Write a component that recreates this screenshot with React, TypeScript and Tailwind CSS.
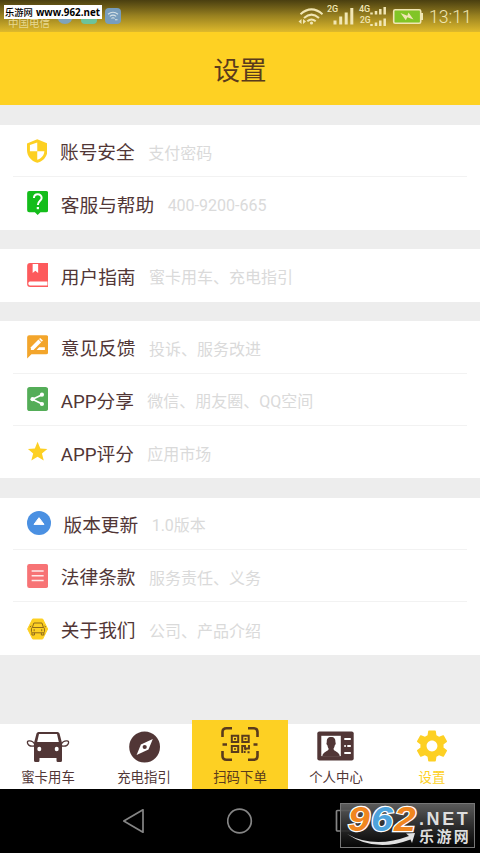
import type { ReactNode } from 'react';

interface SettingItem {
  title: string;
  hint: string;
  icon: ReactNode;
  width: string;
}

const ShieldIcon = () => (
  <svg viewBox="0 0 21 24" className="h-6 w-full">
    <path d="M10.5 0 L21 4.2 V11 C21 17.5 16.8 22.3 10.5 24 C4.2 22.3 0 17.5 0 11 V4.2 Z" fill="#fdd023" />
    <path d="M10.5 3.3 V12.2 H3 V5.9 Z" fill="#fff" />
    <path d="M10.5 12.2 H17.8 C17.4 16.4 14.8 19.6 10.5 21 Z" fill="#fff" />
  </svg>
);

const HelpIcon = () => (
  <svg viewBox="0 0 21 24" className="h-6 w-full">
    <path d="M2 0 H19 Q21 0 21 2 V19.3 Q21 21.3 19 21.3 H13.3 L10.5 24 L7.7 21.3 H2 Q0 21.3 0 19.3 V2 Q0 0 2 0Z" fill="#14bd1b" />
    <path d="M6.8 7 C6.8 2 14.5 2 14.5 6.9 C14.5 9.7 10.7 10 10.7 14" fill="none" stroke="#fff" strokeWidth="2" />
    <rect x="9.6" y="16" width="2.2" height="2.2" fill="#fff" />
  </svg>
);

const BookIcon = () => (
  <svg viewBox="0 0 21 24" className="h-6 w-full">
    <path d="M3 0 H21 V24 H3 Q0 24 0 21 V3 Q0 0 3 0Z" fill="#fd5a5c" />
    <path d="M5.5 1 H11 V10 L8.2 7.8 L5.5 10Z" fill="#fff" />
    <path d="M2.8 18.6 H20.3 V22.6 H2.8 Q1.2 22.4 1.2 20.6 Q1.2 18.8 2.8 18.6Z" fill="#fff" />
  </svg>
);

const FeedbackIcon = () => (
  <svg viewBox="0 0 21 24" className="h-6 w-full">
    <path d="M2 0.3 H19 Q21 0.3 21 2.3 V17.3 Q21 19.3 19 19.3 H4.3 L0 23.6 V2.3 Q0 0.3 2 0.3Z" fill="#f3a52b" />
    <path d="M3.7 12.2 L11.3 4.6 L14 7.3 L6.4 14.9 H3.7Z" fill="#fff" />
    <path d="M11.9 4 L13 2.9 L15.8 5.6 L14.6 6.8Z" fill="#fff" />
    <path d="M9.4 14.9 L12 12.2 H17.7 V14.9Z" fill="#fff" />
  </svg>
);

const ShareIcon = () => (
  <svg viewBox="0 0 21 24" className="h-6 w-full">
    <rect width="21" height="24" rx="2.6" fill="#54ad58" />
    <path d="M15 7.7 L5.4 12.2 L15 17" fill="none" stroke="#fff" strokeWidth="1.8" />
    <circle cx="14.8" cy="7.7" r="2.1" fill="#fff" />
    <circle cx="5.4" cy="12.2" r="2.1" fill="#fff" />
    <circle cx="14.8" cy="17" r="2.1" fill="#fff" />
  </svg>
);

const StarIcon = () => (
  <svg viewBox="0 0 21 24" className="h-6 w-full">
    <path d="M10.4 1.8 L13.2 8.4 L20.2 9 L14.8 13.6 L16.6 20.4 L10.4 16.7 L4.2 20.4 L6 13.6 L0.8 9 L7.7 8.4Z" fill="#fdd023" />
  </svg>
);

const UpdateIcon = () => (
  <svg viewBox="0 0 24 24" className="h-6 w-full">
    <circle cx="12" cy="12" r="12" fill="#4a90e2" />
    <path d="M12 6.7 L17 13.4 H7Z" fill="#fff" stroke="#fff" strokeWidth="1" strokeLinejoin="round" />
  </svg>
);

const TermsIcon = () => (
  <svg viewBox="0 0 21 24" className="h-6 w-full">
    <rect width="21" height="24" rx="2.2" fill="#f77375" />
    <path d="M4.5 7 H16.5 M4.5 11.7 H16.5 M4.5 16.5 H16.5" stroke="#fff" strokeOpacity="0.85" strokeWidth="1.6" />
  </svg>
);

const AboutIcon = () => (
  <svg viewBox="0 0 21 24" className="h-6 w-full">
    <path d="M5.5 2 H15.5 L20.5 12 L15.5 22 H5.5 L0.5 12Z" fill="#fdd023" stroke="#fdd023" strokeLinejoin="round" />
    <g fill="none" stroke="#8f6a1c" strokeWidth="1">
      <path d="M5.2 10.5 L6.7 6 H14.8 L16.3 10.5" />
      <rect x="4.3" y="10.5" width="13" height="5.3" rx="1.2" />
      <path d="M4.8 15.8 V18 H7.3 V15.8 M14.2 15.8 V18 H16.7 V15.8 M7 12.2 V14.2 M14.6 12.2 V14.2 M4.2 9 L2.7 10 M17.3 9 L18.8 10" />
    </g>
  </svg>
);

const groups: SettingItem[][] = [
  [
    { title: '账号安全', hint: '支付密码', icon: <ShieldIcon />, width: 'w-[20.5px]' },
    { title: '客服与帮助', hint: '400-9200-665', icon: <HelpIcon />, width: 'w-[21.3px]' },
  ],
  [{ title: '用户指南', hint: '蜜卡用车、充电指引', icon: <BookIcon />, width: 'w-[21.3px]' }],
  [
    { title: '意见反馈', hint: '投诉、服务改进', icon: <FeedbackIcon />, width: 'w-[21.3px]' },
    { title: 'APP分享', hint: '微信、朋友圈、QQ空间', icon: <ShareIcon />, width: 'w-[21.3px]' },
    { title: 'APP评分', hint: '应用市场', icon: <StarIcon />, width: 'w-[21.3px]' },
  ],
  [
    { title: '版本更新', hint: '1.0版本', icon: <UpdateIcon />, width: 'w-6' },
    { title: '法律条款', hint: '服务责任、义务', icon: <TermsIcon />, width: 'w-[21.3px]' },
    { title: '关于我们', hint: '公司、产品介绍', icon: <AboutIcon />, width: 'w-[21.3px]' },
  ],
];

const CarIcon = () => (
  <svg width="44" height="32" viewBox="0 0 44 32">
    <path
      fillRule="evenodd"
      fill="#513636"
      d="M12.5 1 H31.5 Q33 1 33.5 2.5 L36 12 V29.5 Q36 31 34.5 31 H31.8 Q30.5 31 30.5 29.5 V27 H13.5 V29.5 Q13.5 31 12.2 31 H9.5 Q8 31 8 29.5 V12 L10.5 2.5 Q11 1 12.5 1Z M13 3 L11.2 11 H32.8 L31 3Z"
    />
    <ellipse cx="13.3" cy="18" rx="2" ry="2.2" fill="#fff" />
    <ellipse cx="30.7" cy="18" rx="2" ry="2.2" fill="#fff" />
    <path
      d="M8.5 13 Q7 9.5 3 9.8 Q1 10 1.5 12 Q2.5 15.8 8 15 M35.5 13 Q37 9.5 41 9.8 Q43 10 42.5 12 Q41.5 15.8 36 15"
      fill="none"
      stroke="#513636"
      strokeWidth="1.3"
    />
  </svg>
);

const CompassIcon = () => (
  <svg width="32" height="32" viewBox="0 0 32 32">
    <circle cx="16.6" cy="16" r="15.4" fill="#513636" />
    <path d="M24.8 8 L20.5 18.4 L8.6 24 L12.9 13.6Z" fill="#fff" />
    <circle cx="16.7" cy="16" r="2.1" fill="#513636" />
  </svg>
);

const ScanIcon = () => (
  <svg width="40" height="36" viewBox="0 0 40 36" fill="none" stroke="#5a3b1c">
    <path d="M2.5 11 V6 Q2.5 2.3 6.5 2.3 H12 M28 2.3 H33.5 Q37.5 2.3 37.5 6 V11 M37.5 25 V30 Q37.5 33.7 33.5 33.7 H28 M12 33.7 H6.5 Q2.5 33.7 2.5 30 V25" strokeWidth="2.6" />
    <path d="M2.5 18.5 H7 M33.5 18.5 H37.5" strokeWidth="2.4" />
    <path d="M11.8 9.8 H18.2 V16 H11.8Z M22.3 9.8 H28.7 V16 H22.3Z M11.8 20 H18.2 V26 H11.8Z" strokeWidth="2" />
    <path d="M14 12.9 H16 M24.5 12.9 H26.5 M14 23 H16" strokeWidth="1.6" />
    <path d="M22.2 27 V20 H25 V22.5 H29 V19 M25.5 22.5 V24.3 M23.8 26 H25.6 M27.5 26.2 H29.6" strokeWidth="1.9" />
  </svg>
);

const ProfileIcon = () => (
  <svg width="38" height="30" viewBox="0 0 38 30">
    <rect x="0.3" y="0.4" width="36.4" height="29.2" rx="2" fill="#513636" />
    <rect x="4.3" y="4.8" width="19.5" height="20.3" fill="#fff" />
    <path d="M14.1 6.1 C17.3 6.1 18.6 8.1 18.4 11.2 C19.2 11.8 18.6 13.8 17.8 14.2 C17.5 16.1 16.8 17.1 16.5 17.8 C16.6 20.8 22.3 20.3 22.8 25.3 H5.3 C5.8 20.3 11.5 20.8 11.7 17.8 C11.3 17.1 10.7 16.1 10.4 14.2 C9.6 13.8 9 11.8 9.8 11.2 C9.6 8.1 10.8 6.1 14.1 6.1Z" fill="#513636" />
    <path d="M27.3 8 H33.8 M30.3 15 H33.8 M27.3 15 H28.8 M27.3 22 H33.8" stroke="#fff" strokeWidth="2.2" />
  </svg>
);

const GearIcon = () => (
  <svg width="34" height="34" viewBox="1 1 22 22">
    <path
      fill="#fdd023"
      d="M19.43 12.98c.04-.32.07-.64.07-.98s-.03-.66-.07-.98l2.11-1.65c.19-.15.24-.42.12-.64l-2-3.46c-.12-.22-.39-.3-.61-.22l-2.49 1c-.52-.4-1.08-.73-1.69-.98l-.38-2.65C14.46 2.18 14.25 2 14 2h-4c-.25 0-.46.18-.49.42l-.38 2.65c-.61.25-1.17.59-1.69.98l-2.49-1c-.23-.09-.49 0-.61.22l-2 3.46c-.13.22-.07.49.12.64l2.11 1.65c-.04.32-.07.65-.07.98s.03.66.07.98l-2.11 1.65c-.19.15-.24.42-.12.64l2 3.46c.12.22.39.3.61.22l2.49-1c.52.4 1.08.73 1.69.98l.38 2.65c.03.24.24.42.49.42h4c.25 0 .46-.18.49-.42l.38-2.65c.61-.25 1.17-.59 1.69-.98l2.49 1c.23.09.49 0 .61-.22l2-3.46c.12-.22.07-.49-.12-.64l-2.11-1.65zM12 15.5c-1.93 0-3.5-1.57-3.5-3.5s1.57-3.5 3.5-3.5 3.5 1.57 3.5 3.5-1.57 3.5-3.5 3.5z"
    />
  </svg>
);

const tabs = [
  { label: '蜜卡用车', icon: <CarIcon />, style: 'text-[#513636]', iconPad: 'pt-[3px]' },
  { label: '充电指引', icon: <CompassIcon />, style: 'text-[#513636]', iconPad: 'pt-[3px]' },
  { label: '扫码下单', icon: <ScanIcon />, style: 'bg-[#fdd023] text-[#5a3b1c]', iconPad: 'pb-[2px]' },
  { label: '个人中心', icon: <ProfileIcon />, style: 'text-[#513636]', iconPad: 'pt-[2px]' },
  { label: '设置', icon: <GearIcon />, style: 'text-[#fdd023]', iconPad: 'pt-[2px]' },
];

function StatusBar() {
  return (
    <div className="relative h-8 bg-gradient-to-b from-[#4a3f10] via-[#9a8220] to-[#dfba2c]">
      <span className="absolute top-[16px] left-[8px] text-[10.5px] leading-4 text-[#e8d890]">中国电信</span>
      <div className="absolute top-2 left-[57px] h-4 w-4 rounded-full bg-[#7fa3ba]" />
      <div className="absolute top-2 left-[81px] h-4 w-4 rounded bg-[#6dc39a]" />
      <div className="absolute top-2 left-[105px] flex h-4 w-4 items-center justify-center rounded bg-[#779dbd]">
        <svg width="12" height="12" viewBox="0 0 12 12" fill="none" stroke="#d6e2e6" strokeWidth="1.1">
          <path d="M1 4.3 Q6 0.2 11 4.3 M2.8 6.4 Q6 3.8 9.2 6.4 M4.4 8.4 Q6 7.1 7.6 8.4 M8 9.8 H10.5" />
        </svg>
      </div>
      <div className="absolute top-[5px] left-[4px] flex h-[14px] w-[98px] items-center gap-[3px] bg-white pt-px pl-px text-black">
        <span className="text-[9.3px] leading-3 font-medium whitespace-nowrap">乐游网</span>
        <span className="font-['Open_Sans'] text-[9.8px] leading-3 font-bold whitespace-nowrap">www.962.net</span>
      </div>

      <div className="absolute top-0 right-0 h-8 w-[184px] text-[#f1e6b4]">
        <svg width="184" height="32" viewBox="296 0 184 32">
          <g fill="none" stroke="#f1e6b4" strokeWidth="2">
            <path d="M300.5 14.2 Q311.5 4.6 322.5 14.2" />
            <path d="M304 18 Q311.5 11.2 319 18" />
            <path d="M307.3 21.3 Q311.5 17.6 315.7 21.3" />
          </g>
          <circle cx="311.5" cy="23" r="1.6" fill="#f1e6b4" />
          <path d="M301.5 19 V24 L298.5 21.5Z M303 19 V24 L306 21.5Z" fill="#f1e6b4" />
          <path d="M335 24.5 V20.5 M340.7 24.5 V16.5 M346.2 24.5 V12.5 M351.8 24.5 V8" stroke="#f1e6b4" strokeWidth="3" />
          <path d="M371.5 14.5 V12.5 M376 14.5 V11 M380.3 14.5 V9 M384.7 14.5 V7 M371.5 26 V24 M376 26 V22.5 M380.3 26 V20.5 M384.7 26 V18.5" stroke="#f1e6b4" strokeWidth="2.5" />
          <rect x="393.7" y="9.7" width="27" height="13.6" rx="1.5" fill="#81c526" stroke="#f1e6b4" strokeWidth="1.6" />
          <rect x="421" y="13" width="2" height="7" fill="#f1e6b4" />
          <path d="M400.5 13 L407.3 15.8 L408.5 12.6 L413.5 19.6 L407.3 17.3 L405.8 20.3Z" fill="#f1e6b4" />
        </svg>
        <span className="absolute top-[4px] left-[31px] text-[9px] leading-[10px] font-medium">2G</span>
        <span className="absolute top-[4px] left-[63px] text-[9px] leading-[10px] font-medium">4G</span>
        <span className="absolute top-[15px] left-[64px] text-[8.5px] leading-[10px] font-medium">2G</span>
        <span className="absolute top-[7px] left-[133px] text-[17.6px] leading-5 font-light">13:11</span>
      </div>
    </div>
  );
}

function SettingRow({ item, last }: { item: SettingItem; last: boolean }) {
  return (
    <div className="flex h-[52.3px] flex-col pl-[13px]">
      <div className="flex min-h-0 flex-1 items-center pr-3 pl-[13.5px]">
        <div className={`${item.width} shrink-0`}>{item.icon}</div>
        <span className="mt-[5px] ml-[13px] text-[18.7px] leading-6 whitespace-nowrap text-[#513636]">{item.title}</span>
        <span className="mt-[6px] ml-[13.4px] text-base leading-6 whitespace-nowrap text-[#dadada]">{item.hint}</span>
      </div>
      {!last && <div className="mr-[13px] h-px bg-[#f2f2f2]" />}
    </div>
  );
}

function Watermark() {
  return (
    <div className="absolute top-[14px] left-[340px] h-[45px] w-[135px] border border-[#777] bg-gradient-to-b from-[#656565]/90 to-[#080808]/90">
      <svg width="133" height="43" viewBox="341 804 133 43" className="absolute top-0 left-0 overflow-visible">
        <path d="M347 834 Q374 849 409 836 L406 833.5 L415 833 L412 843 L410.5 839.5 Q375 853 347 834Z" fill="#e2e2e2" />
      </svg>
      <div className="absolute top-[2px] left-[7px] flex w-[72px] justify-between pr-[3px] font-['Liberation_Sans',sans-serif] text-[35px] leading-[25px] font-bold italic [paint-order:stroke] [-webkit-text-stroke:2.4px_#fff]">
        <span className="w-[23px] origin-left scale-x-[1.12] text-[#f0861f]">9</span>
        <span className="w-[23px] origin-left scale-x-[1.12] text-[#4da3dc]">6</span>
        <span className="w-[23px] origin-left scale-x-[1.12] text-[#f0861f]">2</span>
      </div>
      <span className="absolute top-[6px] left-[78px] font-['Liberation_Sans',sans-serif] text-[18px] leading-[18px] font-bold tracking-[2.6px] text-[#dedede]">.NET</span>
      <span className="absolute top-[26px] left-[78px] text-[15px] leading-[15px] font-bold tracking-[2.4px] whitespace-nowrap text-[#dedede]">乐游网</span>
    </div>
  );
}

export default function App() {
  return (
    <div className="flex h-[853px] w-[480px] flex-col overflow-hidden bg-[#ededed] font-[Roboto,'Noto_Sans_CJK_SC',sans-serif]">
      <header className="h-[105px] shrink-0 bg-[#fed123]">
        <StatusBar />
        <h1 className="pt-[19px] text-center text-[26.5px] leading-10 text-[#5a3b1c]">设置</h1>
      </header>

      <main className="flex h-[615px] shrink-0 flex-col gap-[19.7px] pt-5">
        {groups.map((items, i) => (
          <section key={i} className="bg-white">
            {items.map((item, j) => (
              <SettingRow key={item.title} item={item} last={j === items.length - 1} />
            ))}
          </section>
        ))}
      </main>

      <nav className="relative flex h-[69px] shrink-0 bg-[linear-gradient(#ededed_4px,#fff_4px)]">
        {tabs.map((tab) => (
          <div key={tab.label} className={`flex w-24 flex-col items-center ${tab.style}`}>
            <div className={`flex h-[50px] items-center justify-center ${tab.iconPad}`}>{tab.icon}</div>
            <span className="text-[13.4px] leading-4">{tab.label}</span>
          </div>
        ))}
      </nav>

      <footer className="relative h-16 shrink-0 bg-black">
        <div className="flex h-full items-center justify-between pr-[120px] pl-[122px]">
          <svg width="24" height="26" viewBox="0 0 24 26" fill="none" stroke="#858585" strokeWidth="1.7">
            <path d="M21 1.8 V24.2 L1.8 13Z" strokeLinejoin="round" />
          </svg>
          <svg width="26" height="26" viewBox="0 0 26 26" fill="none" stroke="#858585" strokeWidth="1.7">
            <circle cx="12.5" cy="13" r="11.8" />
          </svg>
          <svg width="26" height="26" viewBox="0 0 26 26" fill="none" stroke="#858585" strokeWidth="1.7">
            <rect x="2.5" y="2.5" width="21" height="20.5" rx="1" />
          </svg>
        </div>
        <Watermark />
      </footer>
    </div>
  );
}
